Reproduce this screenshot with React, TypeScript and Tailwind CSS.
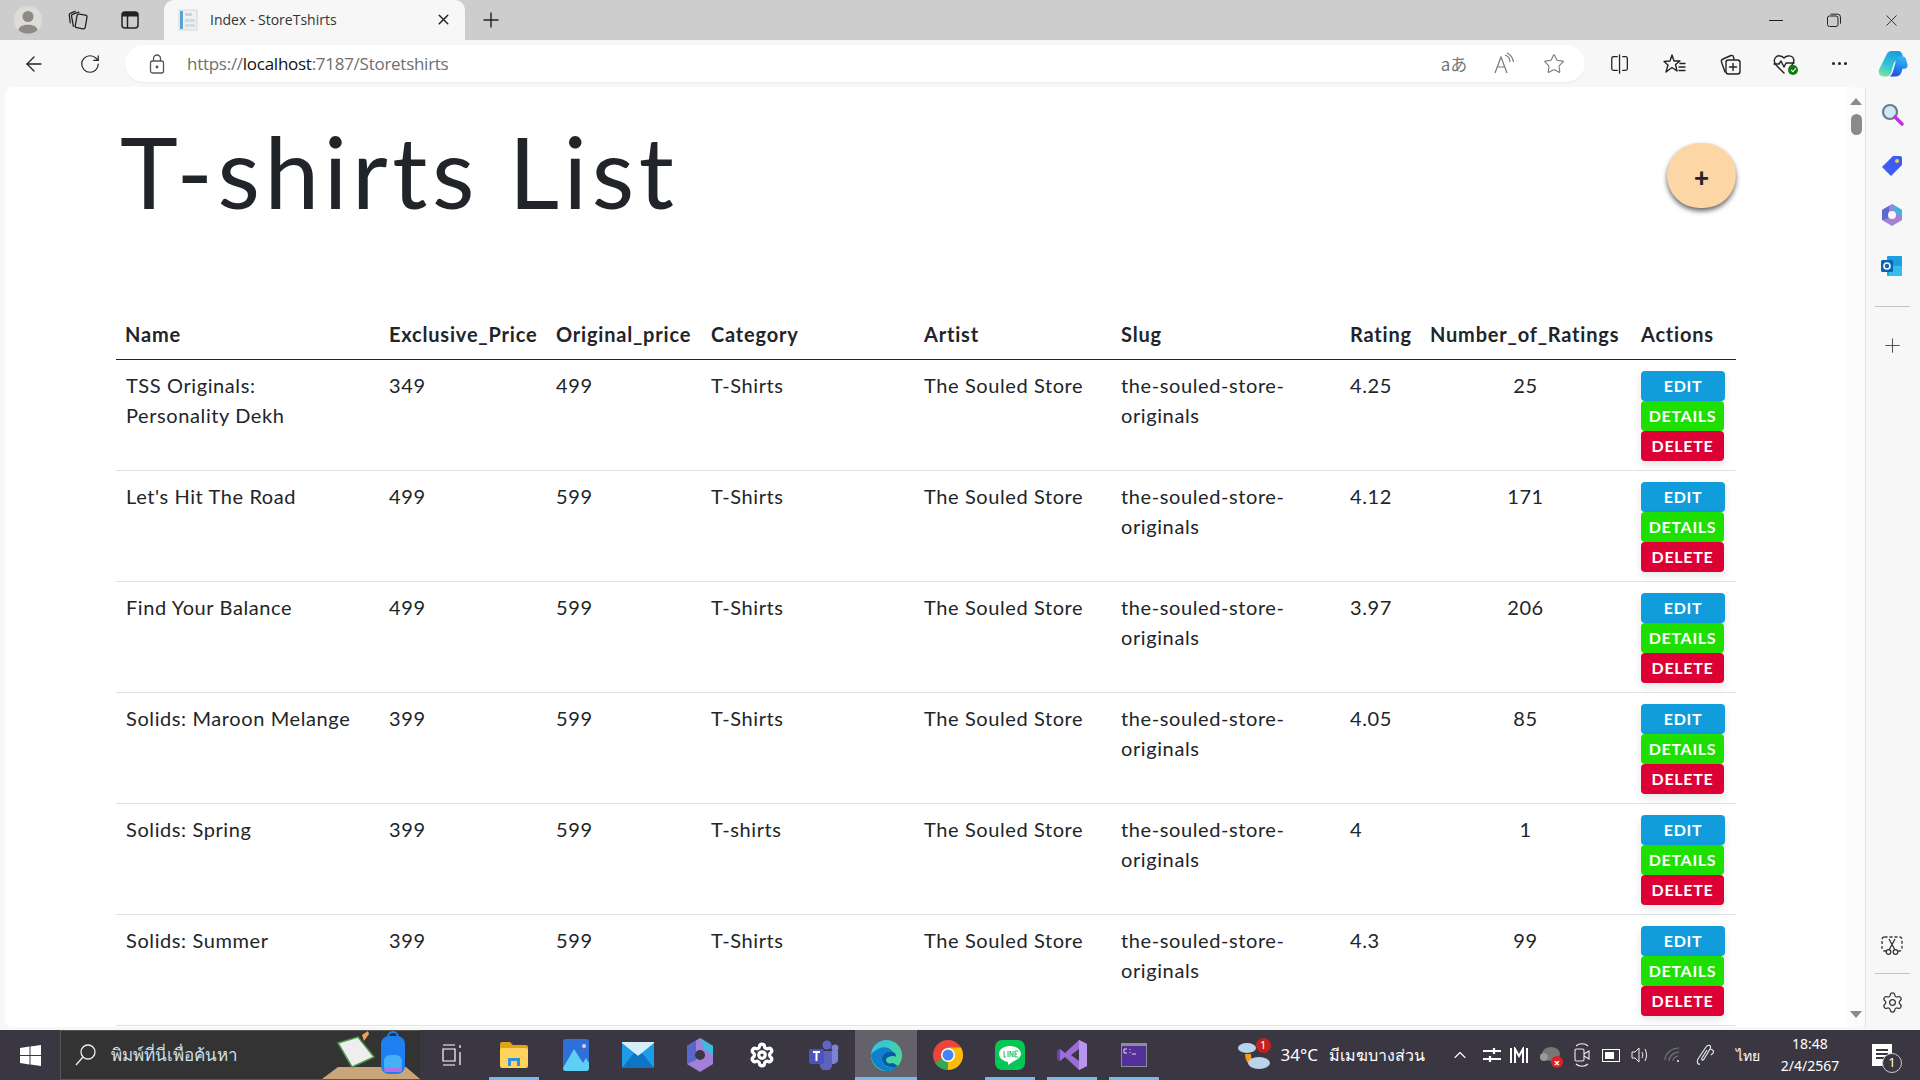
import {ReactElement} from "react";
import {ArrowLeft, ChevronUp, Plus, RotateCw, Settings, Star, X} from "lucide-react";

const rows = [
    {name: "TSS Originals: Personality Dekh", exclusive: "349", original: "499", category: "T-Shirts", rating: "4.25", count: "25"},
    {name: "Let's Hit The Road", exclusive: "499", original: "599", category: "T-Shirts", rating: "4.12", count: "171"},
    {name: "Find Your Balance", exclusive: "499", original: "599", category: "T-Shirts", rating: "3.97", count: "206"},
    {name: "Solids: Maroon Melange", exclusive: "399", original: "599", category: "T-Shirts", rating: "4.05", count: "85"},
    {name: "Solids: Spring", exclusive: "399", original: "599", category: "T-shirts", rating: "4", count: "1"},
    {name: "Solids: Summer", exclusive: "399", original: "599", category: "T-Shirts", rating: "4.3", count: "99"},
];

const headers = ["Name", "Exclusive_Price", "Original_price", "Category", "Artist", "Slug", "Rating", "Number_of_Ratings", "Actions"];

const ToolbarSvg = ({children, size = 24, vb = 24}: {children: ReactElement | ReactElement[], size?: number, vb?: number}) => (
    <svg width={size} height={size} viewBox={`0 0 ${vb} ${vb}`} fill="none" stroke="currentColor" strokeWidth="1.4" strokeLinecap="round" strokeLinejoin="round">
        {children}
    </svg>
);

const TabBar = () => (
    <div className="flex h-[40px] shrink-0 items-end bg-[#cdcdcd] pr-[1px] text-[#222]">
        <div className="flex h-[40px] w-[56px] items-center justify-center">
            <svg width="28" height="28" viewBox="0 0 28 28">
                <circle cx="14" cy="14" r="14" fill="#dedcd8" />
                <circle cx="14" cy="10.5" r="5.5" fill="#8e8a85" />
                <path d="M4.5 24 C5 17 23 17 23.5 24 C19 29 9 29 4.5 24Z" fill="#8e8a85" />
            </svg>
        </div>
        <div className="flex h-[40px] w-[44px] items-center justify-center">
            <ToolbarSvg size={22}>
                <rect x="10" y="6" width="11" height="15" rx="2" transform="rotate(10 15 13)" />
                <path d="M7 19 L5 8 a2 2 0 0 1 1.5 -2.5 L13 3.5" />
                <path d="M3.5 15 L2.5 7 a2 2 0 0 1 1.5 -2.5 L9 2.5" />
            </ToolbarSvg>
        </div>
        <div className="flex h-[40px] w-[60px] items-center justify-center">
            <svg width="18" height="18" viewBox="0 0 18 18" fill="none">
                <rect x="1" y="1" width="16" height="16" rx="3" stroke="#222" strokeWidth="1.5" />
                <path d="M1 5.5 V4 a3 3 0 0 1 3 -3 h10 a3 3 0 0 1 3 3 v1.5 Z" fill="#222" />
                <path d="M6.5 5 V17" stroke="#222" strokeWidth="1.5" />
            </svg>
        </div>
        <div className="ml-[4px] flex h-[40px] w-[301px] items-center rounded-t-[10px] bg-[#f7f7f7] pb-[1px] pl-[14px] pr-[13px]">
            <svg width="20" height="22" viewBox="0 0 20 22" className="mr-[12px] shrink-0">
                <rect x="1" y="1" width="18" height="20" fill="#eef1f4" stroke="#d4d8dc" />
                <rect x="2" y="2" width="3" height="18" fill="#5aa2d6" />
                <rect x="7" y="4" width="7" height="3" fill="#ccd2d8" />
                <rect x="7" y="10" width="10" height="3" fill="#d6dbe0" />
                <rect x="7" y="15" width="10" height="3" fill="#d6dbe0" />
            </svg>
            <span className="flex-1 font-['Open_Sans',sans-serif] text-[14px] text-[#333]">Index - StoreTshirts</span>
            <X size={17} strokeWidth={2} className="text-[#222]" />
        </div>
        <div className="flex h-[40px] w-[52px] items-center justify-center">
            <Plus size={24} strokeWidth={1.4} />
        </div>
        <div className="flex-1" />
        <div className="flex h-[40px] w-[58px] items-center justify-center">
            <div className="h-[1px] w-[14px] bg-[#222]" />
        </div>
        <div className="flex h-[40px] w-[58px] items-center justify-center">
            <svg width="14" height="14" viewBox="0 0 14 14" fill="none" stroke="#222" strokeWidth="1">
                <rect x="0.5" y="3" width="10.5" height="10.5" rx="2" />
                <path d="M3.5 1.2 h7 a3 3 0 0 1 3 3 v6.5" />
            </svg>
        </div>
        <div className="flex h-[40px] w-[56px] items-center justify-center">
            <X size={19} strokeWidth={1.1} />
        </div>
    </div>
);

const AddressBar = () => (
    <div className="flex h-[47px] shrink-0 items-center bg-[#f7f7f7] text-[#222]">
        <div className="flex w-[68px] justify-center">
            <ArrowLeft size={24} strokeWidth={1.3} />
        </div>
        <div className="flex w-[44px] justify-center">
            <RotateCw size={22} strokeWidth={1.3} />
        </div>
        <div className="ml-[13px] flex h-[37px] w-[1460px] items-center rounded-full bg-white pl-[23px] shadow-[0_1px_2px_rgba(0,0,0,0.06)]">
            <svg width="18" height="22" viewBox="0 0 18 22" fill="none" stroke="#555" strokeWidth="1.3">
                <rect x="2.5" y="8" width="13" height="12" rx="2" />
                <path d="M5.5 8 V5.5 a3.5 3.5 0 0 1 7 0 V8" />
                <circle cx="9" cy="14" r="0.8" fill="#555" />
            </svg>
            <div className="ml-[21px] flex-1 font-['Open_Sans',sans-serif] text-[17px] tracking-[-0.27px] text-[#6f6f6f]">
                https://<span className="text-[#111]">localhost</span>:7187/Storetshirts
            </div>
            <div className="flex items-center text-[#777]">
                <span className="w-[50px] text-center font-['Noto_Sans_CJK_JP',sans-serif] text-[17px]">aあ</span>
                <svg width="22" height="24" viewBox="0 0 22 24" fill="none" stroke="#777" strokeWidth="1.2" className="ml-[14px] mr-[19px]">
                    <path d="M2 21 L8 5 L14 21 M4.5 15 H11.5" />
                    <path d="M12 3 C15 4 17 7 17 10 M14 1 C18 3 20 6 20.5 10" />
                </svg>
                <Star size={22} strokeWidth={1.2} className="ml-[9px] mr-[20px]" />
            </div>
        </div>
        <div className="flex items-center">
            <div className="ml-[20px] flex w-[30px] justify-center">
                <ToolbarSvg size={22}>
                    <path d="M9 4 H5 a2 2 0 0 0 -2 2 v11 a2 2 0 0 0 2 2 h4" />
                    <path d="M15 4 h3 a2 2 0 0 1 2 2 v11 a2 2 0 0 1 -2 2 h-3" />
                    <path d="M11.5 2 V22" />
                </ToolbarSvg>
            </div>
            <div className="ml-[24px] flex w-[30px] justify-center">
                <ToolbarSvg size={24}>
                    <path d="M10 3 L12 9 L18 9 L13.5 12.5 L15 19 L10 15.5 L4 20 L6 13 L2 9.5 L8 9 Z" />
                    <path d="M18 11.5 H23 M17 15 H23 M17 18.5 H23" />
                </ToolbarSvg>
            </div>
            <div className="ml-[26px] flex w-[30px] justify-center">
                <ToolbarSvg size={24}>
                    <path d="M7 20 L3.5 10 a2.5 2.5 0 0 1 1.5 -3 L13 3.5 a2 2 0 0 1 2.5 1.5 L16 7" />
                    <rect x="8" y="8" width="14" height="14" rx="2.5" />
                    <path d="M15 11.5 V18.5 M11.5 15 H18.5" />
                </ToolbarSvg>
            </div>
            <div className="relative ml-[24px] flex w-[30px] justify-center">
                <ToolbarSvg size={24}>
                    <path d="M12 21 L4 13 C0 8 4 3 8 4 C10 4 11 5 12 6 C13 5 14 4 16 4 C21 3 24 8 20 13 L18 15" />
                    <path d="M2 12 H7 L9 9 L12 15 L14 11 H22" />
                </ToolbarSvg>
                <div className="absolute right-[1px] top-[13px] flex h-[10px] w-[10px] items-center justify-center rounded-full bg-[#107c10]">
                    <div className="h-[3px] w-[5px] -rotate-45 border-b border-l border-white" />
                </div>
            </div>
            <div className="ml-[25px] flex w-[30px] justify-center gap-[3px]">
                <div className="h-[3px] w-[3px] rounded-full bg-[#222]" />
                <div className="h-[3px] w-[3px] rounded-full bg-[#222]" />
                <div className="h-[3px] w-[3px] rounded-full bg-[#222]" />
            </div>
            <div className="ml-[24px] flex w-[30px] justify-center">
                <svg width="31" height="28" viewBox="0 0 31 28">
                    <defs>
                        <linearGradient id="cp1" x1="0.6" y1="0" x2="0.2" y2="1">
                            <stop offset="0" stopColor="#1f9be0" />
                            <stop offset="0.55" stopColor="#2fc4d8" />
                            <stop offset="1" stopColor="#7fe0a0" />
                        </linearGradient>
                        <linearGradient id="cp2" x1="0.6" y1="0" x2="0.3" y2="1">
                            <stop offset="0" stopColor="#38b6f0" />
                            <stop offset="0.6" stopColor="#1e7fe8" />
                            <stop offset="1" stopColor="#2d48e0" />
                        </linearGradient>
                    </defs>
                    <path d="M9 4 C10 1.5 12 0.5 14 0.5 H21 C23 0.5 24.5 2 25 4 L27 11 H20 C18 11 16.5 12 16 14 L13.5 23 C13 25.5 11 27 8.5 27 H6 C2 27 0 23.5 1 20 Z" fill="url(#cp1)" />
                    <path d="M12 27 H18 C21 27 23 25.5 24 23 L25.5 19 H27 C29.5 19 31 17 30.5 14.5 L29 9 C28.5 7 27 6 25 6 H23 C21 6 19.5 7 19 9 L16 20 C15 23.5 14 26 12 27 Z" fill="url(#cp2)" />
                </svg>
            </div>
        </div>
    </div>
);

const ActionButton = ({label, className}: {label: string, className: string}) => (
    <button className={`flex h-[30px] items-center justify-center rounded-[4px] text-[16px] font-bold tracking-[0.7px] text-white shadow-[0_4px_8px_rgba(0,0,0,0.1)] ${className}`}>
        {label}
    </button>
);

const Content = () => (
    <div className="min-w-0 flex-1 overflow-hidden rounded-l-[8px] bg-white pl-[111px] font-['Lato',sans-serif] text-[20px] leading-[30px] text-[#212529]">
        <div className="flex h-[223px] w-[1620px] items-start justify-between">
            <h1 className="ml-[4px] mt-[29px] text-[98px] leading-[110px] tracking-[4.6px] text-[#212529]">T-shirts List</h1>
            <button className="mt-[56px] flex h-[65px] w-[69px] items-center justify-center rounded-full bg-[#fdd6a5] pt-[3px] text-[26px] font-black shadow-[0_3px_5px_rgba(0,0,0,0.6)]">
                +
            </button>
        </div>
        <table className="w-[1620px] table-fixed border-collapse">
            <colgroup>
                <col className="w-[264px]" />
                <col className="w-[167px]" />
                <col className="w-[155px]" />
                <col className="w-[213px]" />
                <col className="w-[197px]" />
                <col className="w-[229px]" />
                <col className="w-[80px]" />
                <col className="w-[211px]" />
                <col className="w-[104px]" />
            </colgroup>
            <thead>
                <tr className="h-[49px] border-b border-[#212529]">
                    {headers.map((header) => (
                        <th key={header} className="pl-[9px] text-left font-bold tracking-[0.8px] whitespace-nowrap">{header}</th>
                    ))}
                </tr>
            </thead>
            <tbody>
                {rows.map((row) => (
                    <tr key={row.name} className="h-[111px] border-b border-[#dee2e6] align-top tracking-[0.6px]">
                        <td className="pl-[10px] pr-[26px] pt-[10px]">{row.name}</td>
                        <td className="pl-[9px] pt-[10px]">{row.exclusive}</td>
                        <td className="pl-[9px] pt-[10px]">{row.original}</td>
                        <td className="pl-[9px] pt-[10px]">{row.category}</td>
                        <td className="pl-[9px] pt-[10px] whitespace-nowrap">The Souled Store</td>
                        <td className="pl-[9px] pr-[8px] pt-[10px]">the-souled-store-originals</td>
                        <td className="pl-[9px] pt-[10px]">{row.rating}</td>
                        <td className="pr-[2px] pt-[10px] text-center">{row.count}</td>
                        <td className="pl-[9px] pt-[11px]">
                            <div className="flex flex-col items-start">
                                <ActionButton label="EDIT" className="w-[84px] bg-[#119cdb]" />
                                <ActionButton label="DETAILS" className="w-[83px] bg-[#1ee000]" />
                                <ActionButton label="DELETE" className="w-[83px] bg-[#dc0035]" />
                            </div>
                        </td>
                    </tr>
                ))}
            </tbody>
        </table>
    </div>
);

const Scrollbar = () => (
    <div className="flex w-[18px] shrink-0 flex-col items-center rounded-r-[8px] bg-[#fbfbfb] pb-[9px] pt-[11px]">
        <div className="h-0 w-0 border-x-[6px] border-b-[7px] border-x-transparent border-b-[#8a8a8a]" />
        <div className="mt-[9px] h-[21px] w-[11px] rounded-full bg-[#8a8a8a]" />
        <div className="flex-1" />
        <div className="h-0 w-0 border-x-[6px] border-t-[7px] border-x-transparent border-t-[#8a8a8a]" />
    </div>
);

const Sidebar = () => (
    <div className="flex w-[55px] shrink-0 flex-col items-center border-l border-[#e2e2e2] bg-[#f7f7f7] pr-[2px] pt-[14px]">
        <div className="flex h-[25px] items-center justify-center">
            <svg width="24" height="24" viewBox="0 0 24 24" fill="none">
                <circle cx="10" cy="10" r="7" fill="#cfe8f5" stroke="#6b7b88" strokeWidth="2.2" />
                <path d="M15 15 L22 22" stroke="#c02ee0" strokeWidth="3.4" strokeLinecap="round" />
            </svg>
        </div>
        <div className="mt-[27px] flex h-[25px] items-center justify-center">
            <svg width="22" height="22" viewBox="0 0 22 22">
                <path d="M12 1 H19 a2 2 0 0 1 2 2 V10 L10 21 L1 12 Z" fill="#3b5cf5" />
                <circle cx="16" cy="6" r="2" fill="#f6c944" />
            </svg>
        </div>
        <div className="mt-[24px] flex h-[25px] items-center justify-center">
            <svg width="22" height="24" viewBox="0 0 22 24">
                <path d="M11 1 L21 7 V17 L11 23 L1 17 V7 Z" fill="#a77fd8" />
                <path d="M11 1 L21 7 V14 L14 9 Z" fill="#3fb4e0" />
                <path d="M1 7 L8 3 V15 L1 17 Z" fill="#5a6bd0" />
                <circle cx="11" cy="12" r="4" fill="#f7f7f7" />
            </svg>
        </div>
        <div className="mt-[26px] flex h-[25px] items-center justify-center">
            <svg width="22" height="22" viewBox="0 0 22 22">
                <rect x="6" y="1" width="15" height="20" rx="1" fill="#1c9fe0" />
                <path d="M8 11 L21 11 V21 H8Z" fill="#35bdf0" />
                <rect x="0" y="5" width="12" height="12" rx="1.5" fill="#0a64b8" />
                <circle cx="6" cy="11" r="3" fill="none" stroke="#fff" strokeWidth="1.6" />
            </svg>
        </div>
        <div className="mt-[28px] h-[1px] w-[35px] bg-[#c4c4c4]" />
        <div className="mt-[27px] text-[#555]">
            <Plus size={23} strokeWidth={1.1} />
        </div>
        <div className="flex-1" />
        <div className="text-[#333]">
            <svg width="22" height="20" viewBox="0 0 22 20" fill="none" stroke="currentColor" strokeWidth="1.3">
                <rect x="1" y="1" width="20" height="14" rx="2.5" strokeDasharray="3 2" />
                <path d="M8 3 L14 14 M14 3 L8 14" />
                <circle cx="7.5" cy="16" r="2.3" fill="#f7f7f7" />
                <circle cx="14.5" cy="16" r="2.3" fill="#f7f7f7" />
            </svg>
        </div>
        <div className="mt-[17px] h-[1px] w-[35px] bg-[#c4c4c4]" />
        <div className="mb-[13px] mt-[17px] text-[#333]">
            <Settings size={23} strokeWidth={1.3} />
        </div>
    </div>
);

const TaskItem = ({children, active, running}: {children: ReactElement, active?: boolean, running?: boolean}) => (
    <div className={`relative flex h-full w-[62px] shrink-0 items-center justify-center ${active ? "bg-[#64616b]" : ""}`}>
        {children}
        {active && <div className="absolute bottom-0 left-0 h-[3px] w-full bg-[#76b9ed]" />}
        {running && <div className="absolute bottom-0 left-[6px] h-[3px] w-[50px] bg-[#76b9ed]" />}
    </div>
);

const SearchBox = () => (
    <div className="flex h-full w-[360px] shrink-0 items-center border-y border-l border-[#555] bg-[#333] pl-[14px]">
        <svg width="22" height="24" viewBox="0 0 22 24" fill="none" stroke="#eee" strokeWidth="1.3" className="shrink-0">
            <circle cx="13" cy="9" r="7" />
            <path d="M8 14 L1 22" />
        </svg>
        <span className="ml-[14px] font-['Noto_Sans',sans-serif] text-[17px] text-[#cfe0ee] whitespace-nowrap">พิมพ์ที่นี่เพื่อค้นหา</span>
        <div className="flex-1" />
        <svg width="98" height="48" viewBox="0 0 98 48" className="shrink-0">
            <path d="M16 36 H84 L98 48 H0 Z" fill="#c9a67a" />
            <path d="M16 12 L36 6 L52 26 L30 36 Z" fill="#eee" stroke="#4a9a4a" strokeWidth="1.5" />
            <path d="M40 4 L46 0 L47 3 L42 10Z" fill="#f0a060" />
            <rect x="59" y="5" width="24" height="38" rx="8" fill="#1d7ff0" />
            <path d="M66 6 a5 5 0 0 1 10 0" stroke="#1d7ff0" strokeWidth="2" fill="none" />
            <rect x="62" y="24" width="18" height="17" rx="6" fill="#45b0f5" />
            <rect x="62" y="37" width="18" height="4" rx="2" fill="#b070e8" />
        </svg>
    </div>
);

const TrayText = ({children, className}: {children: string, className: string}) => (
    <span className={`font-['Noto_Sans',sans-serif] text-white whitespace-nowrap ${className}`}>{children}</span>
);

const Taskbar = () => (
    <div className="flex h-[50px] shrink-0 items-center bg-[#3a3742]">
        <div className="flex h-full w-[60px] shrink-0 items-center justify-center">
            <svg width="21" height="21" viewBox="0 0 21 21" fill="#fff">
                <path d="M0 3 L9.5 1.6 V10 H0 Z M10.5 1.4 L21 0 V10 H10.5 Z M0 11 H9.5 V19.4 L0 18 Z M10.5 11 H21 V21 L10.5 19.6 Z" />
            </svg>
        </div>
        <SearchBox />
        <div className="ml-[1px] flex h-full">
            <TaskItem>
                <svg width="20" height="24" viewBox="0 0 20 24" fill="none" stroke="#fff" strokeWidth="1.2">
                    <path d="M1 2 H13 M1 22 H13 M1 6 H13 V18 H1Z M18 2 V5 M18 9 V22" />
                </svg>
            </TaskItem>
            <TaskItem running>
                <svg width="28" height="26" viewBox="0 0 28 26">
                    <path d="M0 2 a2 2 0 0 1 2 -2 H10 L13 3 H26 a2 2 0 0 1 2 2 V8 H0Z" fill="#e0a416" />
                    <rect x="0" y="6" width="28" height="20" rx="2" fill="#ffd35c" />
                    <path d="M8 24 V16 H20 V24 H17 V19 H11 V24 Z" fill="#2f8fe0" />
                </svg>
            </TaskItem>
            <TaskItem>
                <svg width="26" height="32" viewBox="0 0 26 32">
                    <rect width="26" height="32" rx="3" fill="#2f6fd8" />
                    <path d="M0 29 L11 10 L20 24 L23 19 L26 24 V29 a3 3 0 0 1 -3 3 H3 a3 3 0 0 1 -3 -3Z" fill="#5fd0f5" />
                    <circle cx="21" cy="7" r="2" fill="#e7c8f5" />
                </svg>
            </TaskItem>
            <TaskItem>
                <svg width="32" height="26" viewBox="0 0 32 26">
                    <rect width="32" height="26" rx="2" fill="#1e9be8" />
                    <path d="M0 1 L16 14 L32 1 V0 H0Z" fill="#d5eefb" />
                    <path d="M0 26 L12 11 L16 14 L20 11 L32 26Z" fill="#0f74c4" />
                </svg>
            </TaskItem>
            <TaskItem>
                <svg width="26" height="34" viewBox="0 0 26 34">
                    <path d="M13 0 L26 8 V26 L13 34 L0 26 V8 Z" fill="#a27fd8" />
                    <path d="M13 0 L26 8 V17 L17 11 Z" fill="#3fb8de" />
                    <path d="M0 8 L9 3 V22 L0 26 Z" fill="#5868c8" />
                    <circle cx="13" cy="17" r="5" fill="#3a3742" />
                </svg>
            </TaskItem>
            <TaskItem>
                <Settings size={26} strokeWidth={3} color="#fff" />
            </TaskItem>
            <TaskItem>
                <svg width="30" height="30" viewBox="0 0 30 30">
                    <circle cx="18" cy="5" r="4.5" fill="#6264c8" />
                    <circle cx="26" cy="8" r="3.5" fill="#7b83d8" />
                    <path d="M21 11 H29 V20 a5 5 0 0 1 -8 3Z" fill="#7b83d8" />
                    <path d="M9 11 H23 V24 a6 6 0 0 1 -12 2Z" fill="#5f62bc" />
                    <rect x="0" y="9" width="15" height="15" rx="2" fill="#4b53bc" />
                    <path d="M4 12 H11 M7.5 12 V21" stroke="#fff" strokeWidth="2" />
                </svg>
            </TaskItem>
            <TaskItem active>
                <svg width="31" height="31" viewBox="0 0 31 31">
                    <defs>
                        <linearGradient id="edge1" x1="0" y1="0" x2="1" y2="1">
                            <stop offset="0" stopColor="#2fc0e8" />
                            <stop offset="1" stopColor="#50e080" />
                        </linearGradient>
                    </defs>
                    <circle cx="15.5" cy="15.5" r="15.5" fill="url(#edge1)" />
                    <path d="M0 15 C1 25 9 31 17 31 C22 31 26 28 27 26 C20 29 12 27 11 20 C10 15 16 10 22 12 C19 7 12 6 7 9 C3 11 1 13 0 15Z" fill="#0f7fcf" />
                    <path d="M11 20 C12 26 20 29 27 26 L22 23 C18 24 15 23 15 20 C15 18 18 16 23 16 C24 16 25 17 25 17 C25 14 24 13 22 12 C16 10 10 15 11 20Z" fill="#0b5aa5" />
                </svg>
            </TaskItem>
            <TaskItem>
                <svg width="30" height="30" viewBox="0 0 30 30">
                    <circle cx="15" cy="15" r="15" fill="#e8453c" />
                    <path d="M15 15 L28 22.5 A15 15 0 0 1 15 30 A15 15 0 0 1 2 22.5 Z" fill="#34a853" />
                    <path d="M15 15 L15 30 A15 15 0 0 0 30 15 A15 15 0 0 0 28 7.5 L15 7.5 Z" fill="#fbbc05" />
                    <circle cx="15" cy="15" r="7" fill="#fff" />
                    <circle cx="15" cy="15" r="5.5" fill="#4285f4" />
                </svg>
            </TaskItem>
            <TaskItem running>
                <svg width="30" height="30" viewBox="0 0 30 30">
                    <rect width="30" height="30" rx="7" fill="#06c755" />
                    <path d="M15 6 C8 6 4 10 4 14 C4 18 8 21 13 22 L13 25 L19 21 C23 19 26 17 26 14 C26 10 22 6 15 6Z" fill="#fff" />
                    <path d="M9 11 V17 H11 M13 11 V17 M15 17 V11 L18 17 V11 M23 11 H20 V17 H23 M20 14 H22" stroke="#06c755" strokeWidth="1" fill="none" />
                </svg>
            </TaskItem>
            <TaskItem running>
                <svg width="30" height="30" viewBox="0 0 30 30">
                    <path d="M22 0 L30 4 V26 L22 30 L8 17 L3 21 L0 19 V11 L3 9 L8 13Z" fill="#9b6bd8" />
                    <path d="M22 9 V21 L14 15Z" fill="#3a3742" />
                    <path d="M22 0 L30 4 V26 L22 30Z" fill="#b794ee" />
                    <path d="M0 11 L3 9 V21 L0 19Z" fill="#6b44a8" />
                </svg>
            </TaskItem>
            <TaskItem running>
                <svg width="26" height="24" viewBox="0 0 26 24">
                    <rect x="0.5" y="0.5" width="25" height="23" fill="#55309a" stroke="#8d8d96" />
                    <rect x="1" y="1" width="24" height="2" fill="#8d8d96" />
                    <path d="M3 6 H6 M3 10 H6 M3 6 V10 M9 6 V7 M9 9 V10 M11 11 H15" stroke="#ddd" strokeWidth="1" />
                </svg>
            </TaskItem>
        </div>
        <div className="flex-1" />
        <div className="flex h-full shrink-0 items-center">
            <div className="relative mr-[2px] flex w-[34px] justify-center">
                <svg width="34" height="30" viewBox="0 0 34 30">
                    <ellipse cx="10" cy="8" rx="9" ry="5" fill="#b9d3ea" />
                    <path d="M8 14 C8 24 16 29 24 27 C18 26 14 22 14 14Z" fill="#f59a1e" />
                    <ellipse cx="22" cy="23" rx="11" ry="6" fill="#b9d3ea" />
                </svg>
                <div className="absolute right-[0px] top-[-2px] flex h-[15px] w-[15px] items-center justify-center rounded-full bg-[#c5211c] font-['Noto_Sans',sans-serif] text-[11px] text-white">1</div>
            </div>
            <TrayText className="ml-[8px] text-[17px]">34°C</TrayText>
            <TrayText className="ml-[11px] text-[16px]">มีเมฆบางส่วน</TrayText>
            <div className="ml-[25px] flex w-[20px] justify-center text-white">
                <ChevronUp size={22} strokeWidth={1.3} />
            </div>
            <div className="ml-[12px] flex w-[20px] justify-center">
                <svg width="18" height="16" viewBox="0 0 18 16" fill="none" stroke="#fff" strokeWidth="2.2">
                    <path d="M0 4 H18 M0 12 H18 M11 1 V7 M7 9 V15" />
                </svg>
            </div>
            <div className="ml-[7px] flex w-[20px] justify-center">
                <svg width="18" height="16" viewBox="0 0 18 16" fill="none" stroke="#fff" strokeWidth="2">
                    <path d="M1 16 V1 M5 16 V2 L9 9 L13 2 V16 M17 16 V1" />
                </svg>
            </div>
            <div className="relative ml-[11px] flex w-[20px] justify-center">
                <svg width="20" height="18" viewBox="0 0 20 18">
                    <ellipse cx="11" cy="8" rx="9" ry="7" fill="#777" />
                    <ellipse cx="4" cy="11" rx="4" ry="4" fill="#999" />
                </svg>
                <div className="absolute bottom-[-4px] right-[-3px] flex h-[12px] w-[12px] items-center justify-center rounded-full bg-[#d8232a] text-[11px] leading-none font-bold text-white">×</div>
            </div>
            <div className="ml-[12px] flex w-[20px] justify-center">
                <svg width="16" height="24" viewBox="0 0 16 24" fill="none" stroke="#eee" strokeWidth="1.1">
                    <path d="M2 3 C5 0 11 0 14 3 M2 21 C5 24 11 24 14 21" />
                    <rect x="1" y="6" width="9" height="12" rx="1.5" />
                    <path d="M10 11 L15 8 V16 L10 13" />
                </svg>
            </div>
            <div className="ml-[9px] flex w-[20px] justify-center">
                <div className="relative h-[13px] w-[18px] border border-white p-[2px]">
                    <div className="h-full w-[9px] bg-white" />
                </div>
            </div>
            <div className="ml-[9px] flex w-[20px] justify-center">
                <svg width="18" height="18" viewBox="0 0 18 18" fill="none" stroke="#eee" strokeWidth="1">
                    <path d="M1 6 H4 L8 2 V16 L4 12 H1Z M11 6 C12 8 12 10 11 12 M14 3 C16 7 16 11 14 15" />
                </svg>
            </div>
            <div className="ml-[13px] flex w-[20px] justify-center">
                <svg width="18" height="16" viewBox="0 0 18 16" fill="none" stroke="#777" strokeWidth="1.1">
                    <path d="M1 13 C1 7 7 1 15 1 M5 14 C5 10 9 5 15 5 M9 14 C9 12 11 9 14 9" />
                    <circle cx="14" cy="14" r="1" fill="#eee" stroke="none" />
                </svg>
            </div>
            <div className="ml-[13px] flex w-[20px] justify-center">
                <svg width="20" height="22" viewBox="0 0 20 22" fill="none" stroke="#eee" strokeWidth="1.1">
                    <path d="M4 20 C1 21 1 17 2 15 L10 3 C12 0 16 1 14 5 L8 15 C7 17 5 16 6 14 L11 6 M14 5 C18 6 19 8 15 11" />
                </svg>
            </div>
            <TrayText className="ml-[20px] w-[26px] text-[14px]">ไทย</TrayText>
            <div className="ml-[16px] flex w-[64px] flex-col items-center font-['Noto_Sans',sans-serif] text-[14px] leading-[22px] text-white">
                <span>18:48</span>
                <span>2/4/2567</span>
            </div>
            <div className="relative ml-[30px] mr-[28px] h-[22px] w-[20px] bg-white">
                <div className="mx-[4px] mt-[5px] h-[2px] bg-[#3a3742]" />
                <div className="mx-[4px] mt-[2px] h-[2px] bg-[#3a3742]" />
                <div className="mx-[4px] mt-[2px] h-[2px] bg-[#3a3742]" />
                <div className="absolute bottom-[-7px] right-[-10px] flex h-[20px] w-[20px] items-center justify-center rounded-full border border-[#ccc] bg-[#3a3742] font-['Noto_Sans',sans-serif] text-[13px] text-white">1</div>
            </div>
        </div>
    </div>
);

const App = (): ReactElement => {
    return (
        <div className="flex h-screen w-full flex-col overflow-hidden bg-[#f7f7f7]">
            <TabBar />
            <AddressBar />
            <div className="flex min-h-0 flex-1 pb-[3px] pl-[5px]">
                <Content />
                <Scrollbar />
                <Sidebar />
            </div>
            <Taskbar />
        </div>
    );
}

export default App;
